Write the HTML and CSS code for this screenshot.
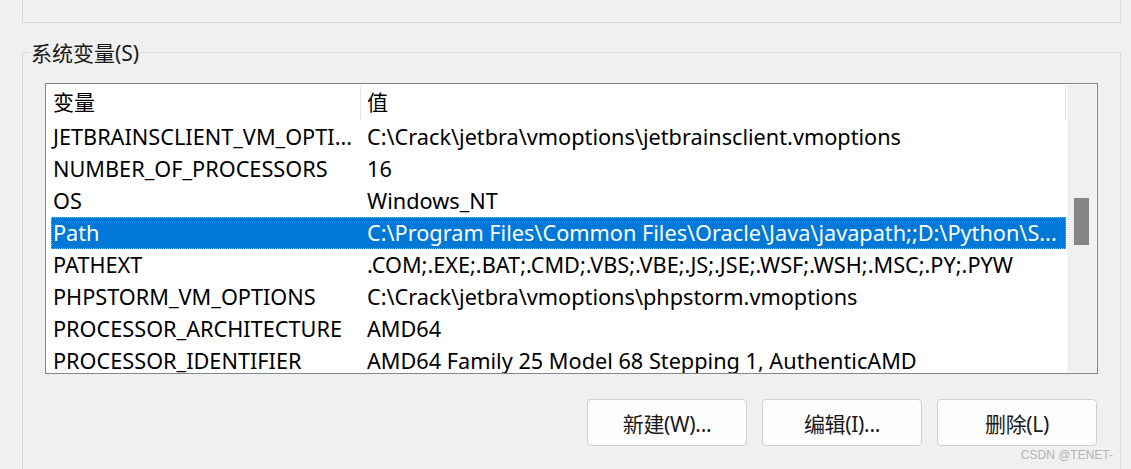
FILE: index.html
```html
<!DOCTYPE html>
<html lang="zh-CN">
<head>
<meta charset="utf-8">
<title>环境变量</title>
<link rel="stylesheet" href="styles.css">
</head>
<body>
<div class="panel">
  <div class="group group-top"></div>
  <div class="group group-sys">
    <div class="legend">系统变量(S)</div>
    <div class="list">
      <div class="table">
        <div class="head">
          <div class="hc hc-name">变量</div>
          <div class="hc hc-val">值</div>
        </div>
        <div class="row"><div class="n">JETBRAINSCLIENT_VM_OPTI...</div><div class="v">C:\Crack\jetbra\vmoptions\jetbrainsclient.vmoptions</div></div>
        <div class="row"><div class="n">NUMBER_OF_PROCESSORS</div><div class="v">16</div></div>
        <div class="row"><div class="n">OS</div><div class="v">Windows_NT</div></div>
        <div class="row selected"><div class="n">Path</div><div class="v">C:\Program Files\Common Files\Oracle\Java\javapath;;D:\Python\S...</div></div>
        <div class="row"><div class="n">PATHEXT</div><div class="v">.COM;.EXE;.BAT;.CMD;.VBS;.VBE;.JS;.JSE;.WSF;.WSH;.MSC;.PY;.PYW</div></div>
        <div class="row"><div class="n">PHPSTORM_VM_OPTIONS</div><div class="v">C:\Crack\jetbra\vmoptions\phpstorm.vmoptions</div></div>
        <div class="row"><div class="n">PROCESSOR_ARCHITECTURE</div><div class="v">AMD64</div></div>
        <div class="row"><div class="n">PROCESSOR_IDENTIFIER</div><div class="v">AMD64 Family 25 Model 68 Stepping 1, AuthenticAMD</div></div>
      </div>
      <div class="scrollbar"><div class="thumb"></div></div>
    </div>
    <div class="buttons">
      <button class="btn">新建(W)...</button>
      <button class="btn">编辑(I)...</button>
      <button class="btn">删除(L)</button>
    </div>
  </div>
</div>
<div class="watermark">CSDN @TENET-</div>
</body>
</html>
```
FILE: styles.css
```css
html, body {
  margin: 0;
  padding: 0;
}
body {
  width: 1131px;
  height: 469px;
  overflow: hidden;
  background: #f0f0f0;
  font-family: "Noto Sans", "Noto Sans CJK SC", sans-serif;
  font-size: 21.7px;
  color: #000;
  position: relative;
}
.panel {
  margin-left: 22px;
  width: 1099px;
}
.group {
  box-sizing: border-box;
  border: 1px solid #dcdcdc;
}
.group-top {
  height: 23px;
  border-top: none;
}
.group-sys {
  margin-top: 29px;
  height: 430px;
  border-bottom: none;
}
.legend {
  width: fit-content;
  margin: -14px 0 0 7px;
  padding: 0 1px;
  line-height: 28px;
  font-size: 21px;
  background: #f0f0f0;
  color: #1a1a1a;
}
.list {
  margin: 16px 22px 0 22px;
  height: 291px;
  box-sizing: border-box;
  border: 1px solid #828790;
  background: #fff;
  display: flex;
}
.table {
  flex: 1;
  overflow: hidden;
}
.head {
  display: grid;
  grid-template-columns: 315px 1fr;
  height: 37px;
  margin-right: 1px;
}
.hc {
  margin: 1px 0;
  border-right: 1px solid #e5e5e5;
  line-height: 35px;
  font-size: 21px;
  white-space: nowrap;
}
.hc-name { padding-left: 7px; }
.hc-val { padding-left: 6px; }
.row {
  display: grid;
  grid-template-columns: 310px 1fr;
  height: 32px;
  line-height: 32px;
  margin: 0 1px 0 5px;
  white-space: nowrap;
}
.row .n {
  padding-left: 2px;
  overflow: hidden;
}
.row .v {
  padding-left: 6px;
  overflow: hidden;
}
.row.selected {
  background: #0078d7;
  color: #fff;
  outline: 1px dotted #f5a04a;
  outline-offset: -1px;
}
.scrollbar {
  width: 30px;
  box-sizing: border-box;
  background: #f0f0f0;
  border: 1px solid #f5f5f5;
  padding: 113px 0 0 6px;
}
.thumb {
  width: 15px;
  height: 47px;
  background: #868686;
}
.buttons {
  display: flex;
  justify-content: flex-end;
  gap: 15px;
  margin: 25px 23px 0 22px;
}
.btn {
  width: 160px;
  height: 47px;
  box-sizing: border-box;
  border: 1px solid #d0d0d0;
  border-radius: 4px;
  background: #fdfdfd;
  font-family: "Noto Sans", "Noto Sans CJK SC", sans-serif;
  font-size: 21px;
  letter-spacing: -0.3px;
  color: #1a1a1a;
  padding: 0;
}
.watermark {
  position: absolute;
  right: 18px;
  top: 448px;
  font-family: "Liberation Sans", Arial, sans-serif;
  font-size: 12px;
  color: #b4b4b4;
}
```
